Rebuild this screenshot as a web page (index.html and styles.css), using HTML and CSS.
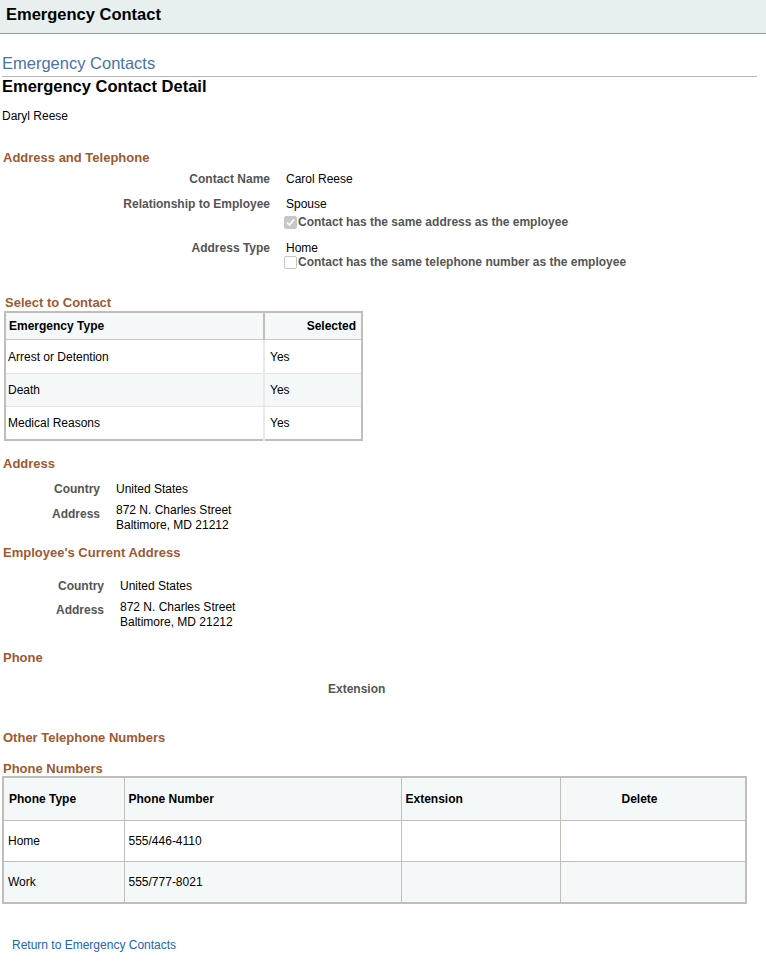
FILE: index.html
```html
<!DOCTYPE html>
<html>
<head>
<meta charset="utf-8">
<link rel="stylesheet" href="styles.css">
</head>
<body>
<div class="hdr">Emergency Contact</div>
<div class="page">
  <div class="crumb">Emergency Contacts</div>
  <div class="detail">Emergency Contact Detail</div>
  <div class="emp">Daryl Reese</div>

  <div class="sec sec-at">Address and Telephone</div>
  <div class="form">
    <div class="frow r1">
      <div class="lbl">Contact Name</div>
      <div class="val">Carol Reese</div>
    </div>
    <div class="frow r2">
      <div class="lbl">Relationship to Employee</div>
      <div class="val">
        <div>Spouse</div>
        <label class="chk chk1"><span class="box checked"><svg viewBox="0 0 13 13" width="13" height="13"><path d="M3 6.5 L5.5 9 L10 3.5" fill="none" stroke="#fff" stroke-width="1.6"/></svg></span>Contact has the same address as the employee</label>
      </div>
    </div>
    <div class="frow r3">
      <div class="lbl">Address Type</div>
      <div class="val">
        <div class="home">Home</div>
        <label class="chk chk2"><span class="box"></span>Contact has the same telephone number as the employee</label>
      </div>
    </div>
  </div>

  <div class="sec sec-sel">Select to Contact</div>
  <table class="grid g1">
    <colgroup><col class="w1"><col class="w2"></colgroup>
    <thead>
      <tr><th class="c1">Emergency Type</th><th class="c2">Selected</th></tr>
    </thead>
    <tbody>
      <tr><td class="c1">Arrest or Detention</td><td class="c2">Yes</td></tr>
      <tr class="alt mid"><td class="c1">Death</td><td class="c2">Yes</td></tr>
      <tr class="last"><td class="c1">Medical Reasons</td><td class="c2">Yes</td></tr>
    </tbody>
  </table>

  <div class="sec sec-addr">Address</div>
  <div class="agrid a1">
    <div class="albl">Country</div><div class="aval">United States</div>
    <div class="albl al2">Address</div><div class="aval av2">872 N. Charles Street<br>Baltimore, MD 21212</div>
  </div>

  <div class="sec sec-cur">Employee's Current Address</div>
  <div class="agrid a2">
    <div class="albl">Country</div><div class="aval">United States</div>
    <div class="albl al2">Address</div><div class="aval av2">872 N. Charles Street<br>Baltimore, MD 21212</div>
  </div>

  <div class="sec sec-ph">Phone</div>
  <div class="ext">Extension</div>

  <div class="sec sec-oth">Other Telephone Numbers</div>
  <div class="sec sec-pn">Phone Numbers</div>
  <table class="grid g2">
    <colgroup><col class="q1"><col class="q2"><col class="q3"><col class="q4"></colgroup>
    <thead>
      <tr><th class="p1">Phone Type</th><th class="p2">Phone Number</th><th class="p3">Extension</th><th class="p4">Delete</th></tr>
    </thead>
    <tbody>
      <tr><td class="p1">Home</td><td class="p2">555/446-4110</td><td class="p3"></td><td class="p4"></td></tr>
      <tr class="alt"><td class="p1">Work</td><td class="p2">555/777-8021</td><td class="p3"></td><td class="p4"></td></tr>
    </tbody>
  </table>

  <a class="ret" href="#">Return to Emergency Contacts</a>
</div>
</body>
</html>
```
FILE: styles.css
```css
html, body {
  margin: 0;
  padding: 0;
  background: #fff;
}
body {
  font-family: "Liberation Sans", Arial, sans-serif;
  font-size: 12px;
  color: #000;
}
.hdr {
  height: 33px;
  line-height: 29px;
  padding-left: 6px;
  background: #e8efef;
  border-bottom: 1px solid #9c9c9c;
  font-size: 16.5px;
  font-weight: bold;
  color: #000;
}
.page {
  padding: 0 9px 0 2px;
}
.crumb {
  margin-top: 19px;
  line-height: 20px;
  padding-bottom: 3px;
  border-bottom: 1px solid #b8b8b8;
  font-size: 16.5px;
  color: #4b72a6;
}
.detail {
  line-height: 19px;
  font-size: 16.5px;
  font-weight: bold;
}
.emp {
  margin-top: 13px;
  line-height: 15px;
}
.sec {
  line-height: 16px;
  font-size: 13px;
  font-weight: bold;
  color: #9c5a33;
  padding-left: 1px;
}
.sec-at { margin-top: 26px; }
.form { margin-top: 6px; }
.frow {
  display: grid;
  grid-template-columns: 268px auto;
  column-gap: 16px;
  line-height: 15px;
}
.r2 { margin-top: 10px; }
.r3 { margin-top: 11px; line-height: 14px; }
.lbl {
  text-align: right;
  font-weight: bold;
  color: #545454;
}
.chk {
  display: flex;
  align-items: center;
  font-weight: bold;
  color: #555;
  margin-left: -2px;
}
.chk1 { margin-top: 3px; }
.box {
  display: inline-block;
  box-sizing: border-box;
  width: 13px;
  height: 13px;
  border: 1px solid #c6c6c6;
  border-radius: 2px;
  background: #fff;
  margin-right: 1px;
  flex: none;
}
.box svg { display: block; margin: -1px; }
.box.checked {
  background: #c8c8c8;
  border-color: #c8c8c8;
}
.sec-sel {
  margin-top: 26px;
  padding-left: 3px;
}
.grid {
  border-collapse: collapse;
  border: 2px solid #c1bdb9;
  table-layout: fixed;
}
.grid th, .grid td {
  text-align: left;
  padding: 0;
  vertical-align: middle;
  overflow: hidden;
  white-space: nowrap;
}
.grid th {
  font-weight: bold;
  background: #f5f8f9;
}
.grid tr.alt td { background: #f5f8f9; }
.g1 {
  margin-left: 2px;
  width: 359px;
}
.g1 .w1 { width: 259px; }
.g1 th { height: 26px; border-bottom: 1px solid #c9c9c9; }
.g1 td { height: 33px; border-top: 1px solid #e1e1e1; }
.g1 tr.mid td { height: 32px; }
.g1 tr.last td { height: 32px; }
.g1 th.c1 { padding-left: 3px; border-right: 2px solid #c1bdb9; }
.g1 td.c1 { padding-left: 2px; border-right: 2px solid #e8e8e8; }
.g1 th.c2 { text-align: right; padding-right: 5px; }
.g1 td.c2 { padding-left: 5px; }

.sec-addr { margin-top: 15px; }
.agrid {
  display: grid;
  line-height: 15px;
  column-gap: 16px;
}
.a1 { grid-template-columns: 98px auto; margin-top: 10px; }
.a2 { grid-template-columns: 102px auto; margin-top: 18px; }
.albl {
  text-align: right;
  font-weight: bold;
  color: #545454;
}
.al2, .av2 { margin-top: 6px; }
.a1 .al2 { padding-top: 4px; }
.a2 .al2 { padding-top: 3px; }
.sec-cur { margin-top: 12px; }
.sec-ph { margin-top: 20px; }
.ext {
  margin-top: 16px;
  line-height: 15px;
  font-weight: bold;
  color: #555;
  padding-left: 326px;
}
.sec-oth { margin-top: 33px; }
.sec-pn { margin-top: 15px; }
.g2 { width: 745px; margin-top: -1px; }
.g2 .q1 { width: 121px; }
.g2 .q2 { width: 277px; }
.g2 .q3 { width: 159px; }
.g2 th, .g2 td { border: 1px solid #c1bdb9; }
.g2 th { height: 42px; }
.g2 td { height: 40px; }
.g2 .p1 { padding-left: 4px; }
.g2 th.p1 { padding-left: 5px; }
.g2 .p2 { padding-left: 4px; }
.g2 .p3 { padding-left: 4px; }
.g2 th.p4 { padding-left: 61px; }
.g2 tr:first-child th { border-top-width: 2px; }
.g2 th:first-child, .g2 td:first-child { border-left-width: 2px; }
.g2 th:last-child, .g2 td:last-child { border-right-width: 2px; }
.g2 tbody tr:last-child td { border-bottom-width: 2px; }
.ret {
  display: inline-block;
  margin-top: 34px;
  margin-left: 10px;
  line-height: 15px;
  color: #2163b5;
  text-decoration: none;
}
```
